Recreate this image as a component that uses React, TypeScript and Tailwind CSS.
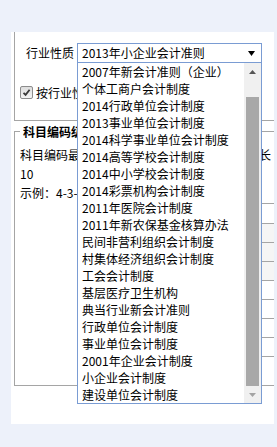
const items = [
  "2007年新会计准则（企业）",
  "个体工商户会计制度",
  "2014行政单位会计制度",
  "2013事业单位会计制度",
  "2014科学事业单位会计制度",
  "2014高等学校会计制度",
  "2014中小学校会计制度",
  "2014彩票机构会计制度",
  "2011年医院会计制度",
  "2011年新农保基金核算办法",
  "民间非营利组织会计制度",
  "村集体经济组织会计制度",
  "工会会计制度",
  "基层医疗卫生机构",
  "典当行业新会计准则",
  "行政单位会计制度",
  "事业单位会计制度",
  "2001年企业会计制度",
  "小企业会计制度",
  "建设单位会计制度",
];

const rows = [0, 1, 2, 3, 4, 5, 6, 7];

export default function App() {
  return (
    <div className="w-[277px] h-[447px] overflow-hidden bg-[#edf1fa] pt-[32px] pl-[11px] text-[12px] text-black font-['Noto_Sans_CJK_SC',sans-serif]">
      <div className="relative w-[263px] h-[392px] overflow-hidden bg-white pl-[3px]">
        {/* first group */}
        <div className="h-[89px] border-l border-b border-[#a5a5a5] pt-[11px]">
          <div className="flex items-center pl-[11px]">
            <span className="w-[48px] leading-[20px] whitespace-nowrap">行业性质</span>
            <div className="relative z-10 ml-[3px] w-[185px] h-[20px]">
              <div className="flex h-full items-center border border-[#7a9cd3] bg-white pl-[4px] pr-[6px]">
                <span className="flex-1 leading-[18px] whitespace-nowrap">2013年小企业会计准则</span>
                <svg width="7" height="5" viewBox="0 0 7 5">
                  <path d="M0 0H7L3.5 5Z" fill="#000" />
                </svg>
              </div>
              <div className="absolute left-0 top-[20px] flex w-[185px] h-[341px] border-x border-b border-[#7a9cd3] bg-white">
                <div className="flex-1 flex flex-col">
                  {items.map((t) => (
                    <div key={t} className="h-[17px] leading-[17px] pl-[4px] whitespace-nowrap">
                      {t}
                    </div>
                  ))}
                </div>
                <div className="w-[17px] h-[340px] flex flex-col bg-[#f0f0f0]">
                  <div className="h-[17px] flex items-center justify-center">
                    <svg width="7" height="4" viewBox="0 0 7 4">
                      <path d="M0 4H7L3.5 0Z" fill="#555" />
                    </svg>
                  </div>
                  <div className="h-[17px]" />
                  <div className="mx-[2px] h-[289px] bg-[#a8a8a8]" />
                  <div className="h-[17px] flex items-center justify-center">
                    <svg width="7" height="4" viewBox="0 0 7 4">
                      <path d="M0 0H7L3.5 4Z" fill="#a3a3a3" />
                    </svg>
                  </div>
                </div>
              </div>
            </div>
          </div>
          <div className="mt-[23px] flex h-[13px] items-center pl-[5px]">
            <div className="flex w-[13px] h-[13px] items-center justify-center rounded-[2px] border border-[#8c8c8c] bg-gradient-to-b from-[#dedede] to-[#f4f4f4]">
              <svg width="9" height="9" viewBox="0 0 9 9">
                <path d="M1.5 4.8L3.6 6.9L7.6 1.8" stroke="#3a3a3a" strokeWidth="1.8" fill="none" />
              </svg>
            </div>
            <span className="ml-[3px] leading-[13px] whitespace-nowrap">按行业性质预置会计科目</span>
          </div>
        </div>

        {/* second group */}
        <fieldset className="mt-[2px] w-[275px] min-w-0 border border-[#a5a5a5] pl-[5px] pt-[5px] pb-[28px]">
          <legend className="px-[3px] leading-[17px] font-bold whitespace-nowrap">科目编码级次设置</legend>
          <div className="flex w-[251px] justify-between leading-[19px] whitespace-nowrap">
            <span>科目编码最大级次</span>
            <span>长</span>
          </div>
          <div className="leading-[19px]">10</div>
          <div className="leading-[19px] whitespace-nowrap">示例：4-3-2-2</div>
          <div className="mt-[1px] ml-[70px] border-t border-[#a5a5a5]">
            {rows.map((r) => (
              <div
                key={r}
                className={
                  (r === 0 ? "h-[20px] " : "h-[19px] ") +
                  "border-b border-[#a5a5a5] " +
                  (r >= 1 && r <= 3 ? "bg-[#f5f5f5]" : "bg-white")
                }
              />
            ))}
          </div>
        </fieldset>
      </div>
    </div>
  );
}
